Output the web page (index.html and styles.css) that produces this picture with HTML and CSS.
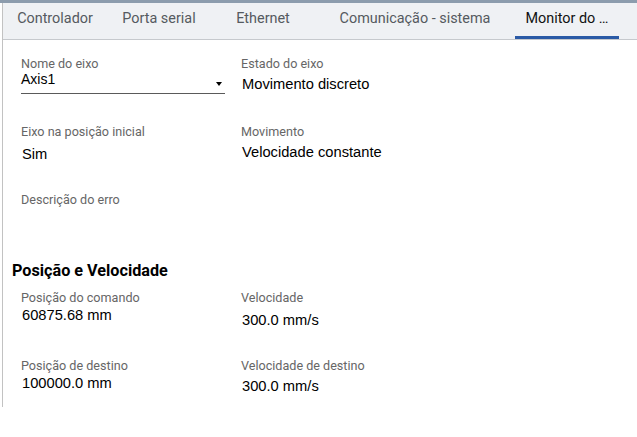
FILE: index.html
```html
<!DOCTYPE html>
<html lang="pt">
<head>
<meta charset="utf-8">
<title>Monitor do eixo</title>
<link rel="stylesheet" href="styles.css">
</head>
<body>
<div class="topstrip"></div>
<div class="panel">
  <nav class="tabs">
    <div class="tab">Controlador</div>
    <div class="tab">Porta serial</div>
    <div class="tab">Ethernet</div>
    <div class="tab tab-wide">Comunicação - sistema</div>
    <div class="tab tab-active">Monitor do …</div>
  </nav>
  <main class="content">
    <section class="grid">
      <div class="field">
        <div class="label">Nome do eixo</div>
        <div class="select">
          <span class="select-value">Axis1</span>
          <span class="caret"></span>
        </div>
      </div>
      <div class="field">
        <div class="label">Estado do eixo</div>
        <div class="value off3">Movimento discreto</div>
      </div>
      <div class="field">
        <div class="label">Eixo na posição inicial</div>
        <div class="value off6">Sim</div>
      </div>
      <div class="field">
        <div class="label">Movimento</div>
        <div class="value off3">Velocidade constante</div>
      </div>
      <div class="field">
        <div class="label">Descrição do erro</div>
      </div>
    </section>
    <h2 class="heading">Posição e Velocidade</h2>
    <section class="grid">
      <div class="field">
        <div class="label">Posição do comando</div>
        <div class="value off1">60875.68 mm</div>
      </div>
      <div class="field">
        <div class="label">Velocidade</div>
        <div class="value off6">300.0 mm/s</div>
      </div>
      <div class="field">
        <div class="label">Posição de destino</div>
        <div class="value off1">100000.0 mm</div>
      </div>
      <div class="field">
        <div class="label">Velocidade de destino</div>
        <div class="value off3">300.0 mm/s</div>
      </div>
    </section>
  </main>
</div>
</body>
</html>
```
FILE: styles.css
```css
* { box-sizing: border-box; }
html, body { margin: 0; padding: 0; background: #ffffff; }
body { font-family: Roboto, "Liberation Sans", sans-serif; color: #000; width: 637px; height: 437px; overflow: hidden; }

.topstrip { height: 3px; background: #8c9cad; }

.panel {
  margin-left: 2px;
  border-left: 1px solid #c2c2c2;
  height: 404px;
}

.tabs {
  display: flex;
  height: 37px;
  background: #eff1f4;
  border-bottom: 1px solid #c6c9cd;
}
.tab {
  flex: 0 0 104px;
  height: 36px;
  padding-top: 8px;
  text-align: center;
  font-size: 14.4px;
  line-height: 16px;
  color: #555a60;
  white-space: nowrap;
}
.tab-wide { flex-basis: 200px; }
.tab-active {
  color: #111;
  border-bottom: 3px solid #2a5aa6;
}

.content { padding: 17px 0 0 18px; }

.grid {
  display: grid;
  grid-template-columns: 220px 220px;
  grid-auto-rows: 68px;
}

.label {
  font-size: 12.6px;
  line-height: 14px;
  color: #666;
}

.value {
  padding-left: 1px;
  font-family: "Liberation Sans", Arial, sans-serif;
  font-size: 14.7px;
  line-height: 18px;
  color: #000;
}
.off1 { margin-top: 1px; }
.off3 { margin-top: 3.5px; }
.off6 { margin-top: 6px; }

.select {
  display: flex;
  justify-content: space-between;
  width: 204px;
  margin-top: -1px;
  padding-bottom: 5px;
  border-bottom: 1px solid #5a5a5a;
}
.select-value {
  font-family: "Liberation Sans", Arial, sans-serif;
  font-size: 14px;
  line-height: 18px;
}
.caret {
  width: 0;
  height: 0;
  margin: 12px 3px 0 0;
  border-left: 3px solid transparent;
  border-right: 3px solid transparent;
  border-top: 4px solid #000;
}

.heading {
  margin: 0 0 10px -9px;
  font-size: 16.2px;
  line-height: 20px;
  font-weight: 700;
  color: #000;
}
```
